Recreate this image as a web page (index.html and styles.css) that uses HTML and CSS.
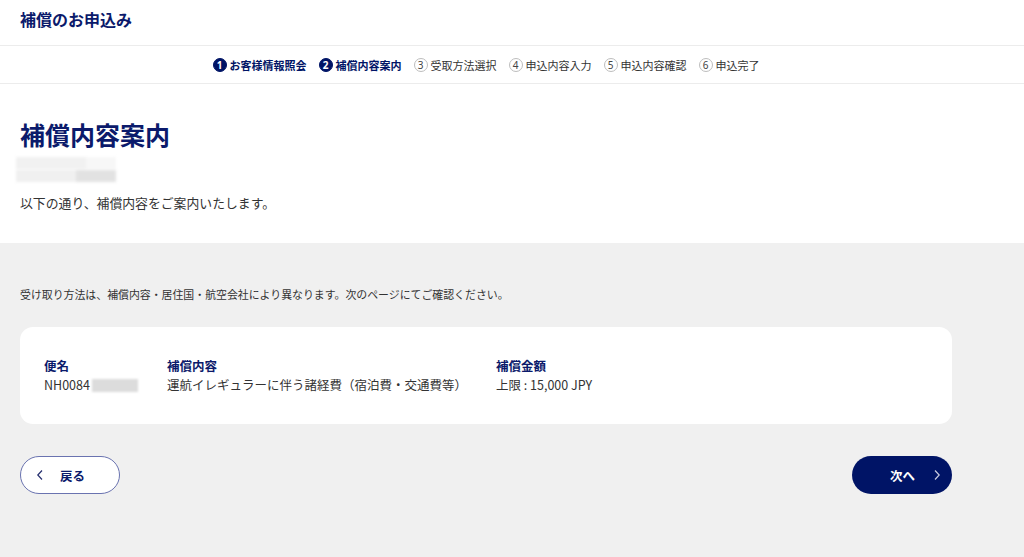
FILE: index.html
```html
<!DOCTYPE html>
<html lang="ja">
<head>
<meta charset="utf-8">
<title>補償のお申込み</title>
<link rel="stylesheet" href="styles.css">
</head>
<body>
<header class="site-header">
  <div class="site-title">補償のお申込み</div>
</header>
<nav class="steps">
  <div class="steps-inner">
    <ol class="steps-list">
      <li class="step done"><span class="num">1</span><span class="label">お客様情報照会</span></li>
      <li class="step done"><span class="num">2</span><span class="label">補償内容案内</span></li>
      <li class="step"><span class="num">3</span><span class="label">受取方法選択</span></li>
      <li class="step"><span class="num">4</span><span class="label">申込内容入力</span></li>
      <li class="step"><span class="num">5</span><span class="label">申込内容確認</span></li>
      <li class="step"><span class="num">6</span><span class="label">申込完了</span></li>
    </ol>
  </div>
</nav>
<section class="intro">
  <div class="container">
    <h1 class="page-title">補償内容案内</h1>
    <div class="masked masked-name"><span></span><span></span><span></span><span></span></div>
    <p class="lead">以下の通り、補償内容をご案内いたします。</p>
  </div>
</section>
<main class="gray">
  <div class="container">
    <p class="notice">受け取り方法は、補償内容・居住国・航空会社により異なります。次のページにてご確認ください。</p>
    <div class="card">
      <div class="col">
        <div class="col-label">便名</div>
        <div class="col-value">NH0084<span class="masked masked-inline"></span></div>
      </div>
      <div class="col">
        <div class="col-label">補償内容</div>
        <div class="col-value">運航イレギュラーに伴う諸経費（宿泊費・交通費等）</div>
      </div>
      <div class="col">
        <div class="col-label">補償金額</div>
        <div class="col-value">上限 : 15,000 JPY</div>
      </div>
    </div>
    <div class="actions">
      <button class="btn btn-back" type="button">
        <svg class="chev" width="8" height="12" viewBox="0 0 8 12"><polyline points="6,1.5 1.8,6 6,10.5" fill="none" stroke="#26306f" stroke-width="1.2"/></svg>
        <span>戻る</span>
      </button>
      <button class="btn btn-next" type="button">
        <span>次へ</span>
        <svg class="chev" width="8" height="12" viewBox="0 0 8 12"><polyline points="2,1.5 6.2,6 2,10.5" fill="none" stroke="#c8cbe0" stroke-width="1.2"/></svg>
      </button>
    </div>
  </div>
</main>
</body>
</html>
```
FILE: styles.css
```css
* { box-sizing: border-box; }
html, body { margin: 0; padding: 0; }
body {
  font-family: "Noto Sans CJK JP", "Noto Sans", sans-serif;
  color: #333;
  background: #fff;
  min-height: 557px;
  display: flex;
  flex-direction: column;
}
.site-header {
  height: 46px;
  display: flex;
  align-items: center;
  padding-left: 20px;
  border-bottom: 1px solid #ececec;
}
.site-title {
  font-size: 16px;
  font-weight: 700;
  color: #0b1a6b;
  margin-top: -7px;
}
.steps {
  height: 38px;
  border-bottom: 1px solid #ececec;
  display: flex;
  align-items: center;
}
.steps-inner {
  width: 972px;
  display: flex;
  justify-content: center;
}
.steps-list {
  list-style: none;
  margin: 0;
  padding: 0;
  display: flex;
  gap: 12px;
}
.step {
  display: flex;
  align-items: center;
  gap: 3px;
  font-size: 11px;
  color: #333;
}
.step .num {
  width: 14px;
  height: 14px;
  border-radius: 50%;
  border: 1px solid #bdbdbd;
  display: flex;
  align-items: center;
  justify-content: center;
  font-size: 10px;
  line-height: 1;
  color: #444;
  font-family: "Noto Sans", sans-serif;
}
.step.done .num {
  background: #001466;
  border-color: #001466;
  color: #fff;
  font-weight: 700;
}
.step.done .label {
  font-weight: 700;
  color: #001466;
}
.container {
  width: 932px;
  margin-left: 20px;
}
.intro {
  padding-top: 33px;
  padding-bottom: 31px;
}
.page-title {
  margin: 0;
  font-size: 25px;
  line-height: 34px;
  font-weight: 700;
  color: #0b1a6b;
}
.masked {
  display: inline-block;
  filter: blur(1.5px);
}
.masked-name {
  display: flex;
  width: 100px;
  height: 25px;
  margin-top: 6px;
  margin-left: -4px;
  flex-wrap: wrap;
}
.masked-name span { height: 12px; }
.masked-name span:nth-child(1) { width: 70px; background: #f1f1f1; }
.masked-name span:nth-child(2) { width: 30px; background: #f7f7f7; }
.masked-name span:nth-child(3) { width: 60px; background: #f0f0f0; }
.masked-name span:nth-child(4) { width: 40px; background: #e2e2e2; }
.lead {
  margin: 12px 0 0;
  font-size: 12.85px;
  line-height: 18px;
  color: #333;
}
.gray {
  background: #f0f0f0;
  flex: 1;
  padding-top: 43px;
  padding-bottom: 40px;
}
.notice {
  margin: 0;
  font-size: 10.9px;
  line-height: 16px;
  color: #333;
}
.card {
  margin-top: 25px;
  background: #fff;
  border-radius: 13px;
  height: 97px;
  padding: 30px 24px 0;
  display: grid;
  grid-template-columns: 123px 329px 1fr;
}
.col-label {
  font-size: 12.5px;
  line-height: 18px;
  font-weight: 700;
  color: #0b1a6b;
}
.col-value {
  font-size: 12.5px;
  line-height: 20px;
  color: #333;
  display: flex;
  align-items: center;
}
.masked-inline {
  width: 46px;
  height: 13px;
  background: #dcdcdc;
  margin-left: 2px;
  filter: blur(1px);
}
.actions {
  margin-top: 32px;
  display: flex;
  justify-content: space-between;
}
.btn {
  width: 100px;
  height: 38px;
  border-radius: 19px;
  display: flex;
  align-items: center;
  font-family: "Noto Sans CJK JP", "Noto Sans", sans-serif;
  font-size: 12.5px;
  font-weight: 700;
  cursor: pointer;
  padding: 0;
}
.btn-back {
  background: #fff;
  border: 1.5px solid #6a73b0;
  color: #0b1a6b;
  padding-left: 15px;
  gap: 16px;
}
.btn-next {
  background: #001466;
  border: none;
  color: #fff;
  padding-left: 38px;
  gap: 18px;
}
.chev { display: block; }
```
